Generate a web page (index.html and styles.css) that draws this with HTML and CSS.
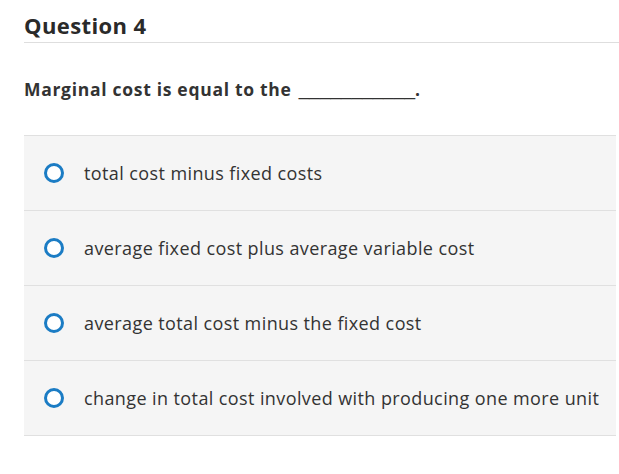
FILE: index.html
```html
<!DOCTYPE html>
<html>
<head>
<meta charset="utf-8">
<link rel="stylesheet" href="styles.css">
</head>
<body>
<div class="page">
  <h2 class="title">Question 4</h2>
  <p class="prompt">Marginal cost is equal to the <span class="blank">___________</span>.</p>
  <ul class="options">
    <li class="option"><span class="radio"></span><span class="label">total cost minus fixed costs</span></li>
    <li class="option"><span class="radio"></span><span class="label">average fixed cost plus average variable cost</span></li>
    <li class="option"><span class="radio"></span><span class="label">average total cost minus the fixed cost</span></li>
    <li class="option"><span class="radio"></span><span class="label">change in total cost involved with producing one more unit</span></li>
  </ul>
</div>
</body>
</html>
```
FILE: styles.css
```css
html, body {
  margin: 0;
  padding: 0;
  background: #fff;
}
body {
  font-family: "Open Sans", "Liberation Sans", sans-serif;
  font-variant-ligatures: none;
  color: #333;
}
.page {
  padding-left: 24px;
}
.title {
  margin: 0;
  padding-top: 11px;
  height: 31px;
  font-size: 22px;
  line-height: 28px;
  font-weight: 700;
  letter-spacing: 0.4px;
  color: #2a2a2a;
  border-bottom: 1px solid #dedede;
}
.prompt {
  margin: 0;
  height: 92px;
  display: flex;
  align-items: center;
  white-space: pre;
  font-size: 17.5px;
  font-weight: 700;
  letter-spacing: 0.7px;
  color: #333;
}
.blank {
  font-family: "Liberation Sans", sans-serif;
  font-size: 19px;
  font-weight: 400;
  letter-spacing: 0;
  vertical-align: 2px;
  margin-left: 2px;
}
.options {
  list-style: none;
  margin: 0;
  padding: 0;
  width: 592px;
  border-top: 1px solid #e0e0e0;
}
.option {
  height: 74px;
  display: flex;
  align-items: center;
  background: #f5f5f5;
  border-bottom: 1px solid #e0e0e0;
}
.radio {
  box-sizing: border-box;
  width: 20px;
  height: 20px;
  border: 3px solid #1b7cc4;
  border-radius: 50%;
  margin-left: 20px;
  margin-right: 20px;
  background: #fff;
}
.label {
  font-size: 18px;
  letter-spacing: 0.4px;
  color: #333;
}
```
